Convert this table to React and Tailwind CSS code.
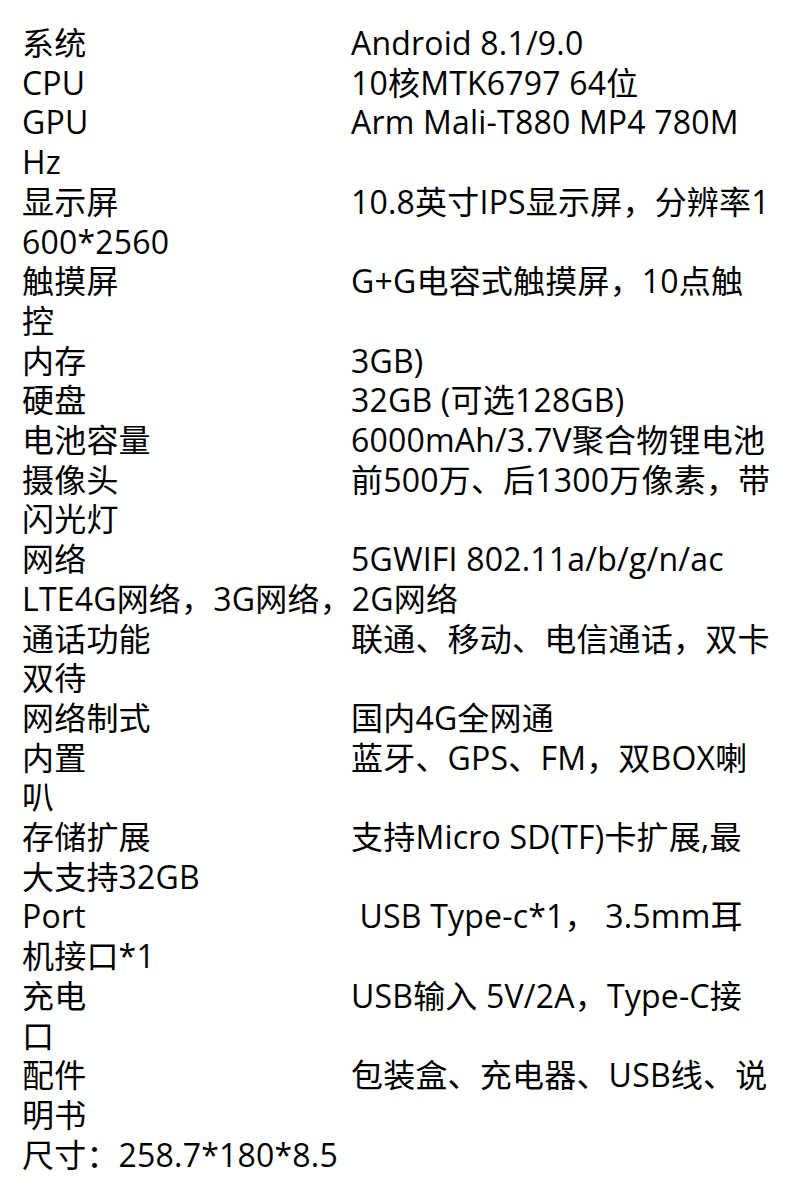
import React from 'react';

const specs = [
    ['系统', ['Android 8.1/9.0']],
    ['CPU', ['10核MTK6797 64位']],
    ['GPU', ['Arm Mali-T880 MP4 780M', 'Hz']],
    ['显示屏', ['10.8英寸IPS显示屏，分辨率1', '600*2560']],
    ['触摸屏', ['G+G电容式触摸屏，10点触', '控']],
    ['内存', ['3GB)']],
    ['硬盘', ['32GB (可选128GB)']],
    ['电池容量', ['6000mAh/3.7V聚合物锂电池']],
    ['摄像头', ['前500万、后1300万像素，带', '闪光灯']],
    ['网络', ['5GWIFI 802.11a/b/g/n/ac', 'LTE4G网络，3G网络，2G网络']],
    ['通话功能', ['联通、移动、电信通话，双卡', '双待']],
    ['网络制式', ['国内4G全网通']],
    ['内置', ['蓝牙、GPS、FM，双BOX喇', '叭']],
    ['存储扩展', ['支持Micro SD(TF)卡扩展,最', '大支持32GB']],
    ['Port', ['\u00a0USB Type-c*1， 3.5mm耳', '机接口*1']],
    ['充电', ['USB输入 5V/2A，Type-C接', '口']],
    ['配件', ['包装盒、充电器、USB线、说', '明书']],
];

export default function App() {
    return (
        <div
            className="bg-white text-black px-[22px] pt-[23px] pb-10 text-[32px] leading-[39.7px] tracking-[0.2px] whitespace-nowrap"
            style={{ fontFamily: '"Open Sans", "Noto Sans CJK SC", sans-serif' }}
        >
            {specs.map(([label, lines], i) => (
                <div key={i}>
                    <span className="inline-block w-[329px]">{label}</span>
                    {lines.map((line, j) => (
                        <React.Fragment key={j}>
                            {j > 0 && <br />}
                            {line}
                        </React.Fragment>
                    ))}
                </div>
            ))}
            <div>尺寸：258.7*180*8.5</div>
        </div>
    );
}
